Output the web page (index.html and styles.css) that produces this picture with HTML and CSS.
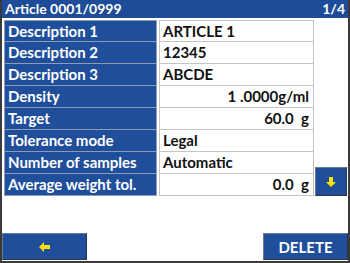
FILE: index.html
```html
<!DOCTYPE html>
<html lang="en">
<head>
    <meta charset="UTF-8">
    <title>Article</title>
    <link rel="stylesheet" href="styles.css">
</head>
<body>
    <div class="screen">
        <div class="titlebar">
            <span>Article 0001/0999</span>
            <span>1/4</span>
        </div>

        <div class="content">
            <div class="params">
                <div class="row"><div class="label">Description 1</div><div class="value">ARTICLE 1</div></div>
                <div class="row"><div class="label">Description 2</div><div class="value">12345</div></div>
                <div class="row"><div class="label">Description 3</div><div class="value">ABCDE</div></div>
                <div class="row"><div class="label">Density</div><div class="value num">1 .0000g/ml</div></div>
                <div class="row"><div class="label">Target</div><div class="value num">60.0  g</div></div>
                <div class="row"><div class="label">Tolerance mode</div><div class="value">Legal</div></div>
                <div class="row"><div class="label">Number of samples</div><div class="value">Automatic</div></div>
                <div class="row"><div class="label">Average weight tol.</div><div class="value num">0.0  g</div></div>
            </div>
            <div class="side">
                <button class="btn btn-small">
                    <svg width="12" height="12" viewBox="0 0 12 12"><path d="M4 1h4v5h3l-5 5-5-5h3z" fill="#ffe10a"/></svg>
                </button>
            </div>
        </div>

        <div class="footer">
            <button class="btn btn-wide">
                <svg width="14" height="12" viewBox="0 0 14 12"><path d="M1 6l5-5v3h6v4h-6v3z" fill="#ffe10a"/></svg>
            </button>
            <button class="btn btn-wide">DELETE</button>
        </div>
    </div>
</body>
</html>
```

FILE: styles.css
```css
body {
    margin: 0;
    background-color: #ffffff;
    font-family: Lato, "Open Sans", sans-serif;
}

.screen {
    width: 350px;
    height: 263px;
    box-sizing: border-box;
    border-left: 2px solid #3a3a3a;
    border-right: 2px solid #3a3a3a;
    border-bottom: 2px solid #3a3a3a;
    display: flex;
    flex-direction: column;
}

.titlebar {
    height: 18px;
    background-color: #1e4c98;
    color: #ffffff;
    font-size: 14px;
    font-weight: 700;
    line-height: 18px;
    padding: 0 3px 0 3px;
    display: flex;
    justify-content: space-between;
}

.content {
    display: flex;
    padding: 2px 0 0 2px;
}

.params {
    width: 310px;
}

.row {
    display: flex;
    height: 22px;
    gap: 2px;
}

.label {
    width: 153px;
    box-sizing: border-box;
    background-color: #1f4e9b;
    border: 1px solid #8e9bb4;
    border-top: none;
    color: #ffffff;
    font-size: 15px;
    font-weight: 700;
    line-height: 21px;
    padding-left: 3px;
    white-space: nowrap;
}

.row:first-child .label {
    border-top: 1px solid #8e9bb4;
}

.value {
    flex: 1;
    box-sizing: border-box;
    border: 1px solid #c4c4c4;
    border-top: none;
    color: #111111;
    font-size: 15px;
    font-weight: 700;
    line-height: 21px;
    padding: 0 4px 0 3px;
    white-space: pre;
}

.row:first-child .value {
    border-top: 1px solid #c4c4c4;
}

.value.num {
    text-align: right;
}

.side {
    display: flex;
    flex-direction: column;
    justify-content: flex-end;
    margin-left: 1px;
}

.btn {
    background-color: #1f4e9b;
    color: #ffffff;
    border: 1px solid #2c3446;
    border-top-color: #6b7890;
    border-left-color: #6b7890;
    font-family: Lato, "Open Sans", sans-serif;
    font-size: 15px;
    font-weight: 700;
    padding: 0;
    display: flex;
    align-items: center;
    justify-content: center;
}

.btn-small {
    width: 32px;
    height: 29px;
}

.footer {
    margin-top: auto;
    margin-bottom: 1px;
    display: flex;
    justify-content: space-between;
}

.btn-wide {
    width: 85px;
    height: 27px;
}
```
